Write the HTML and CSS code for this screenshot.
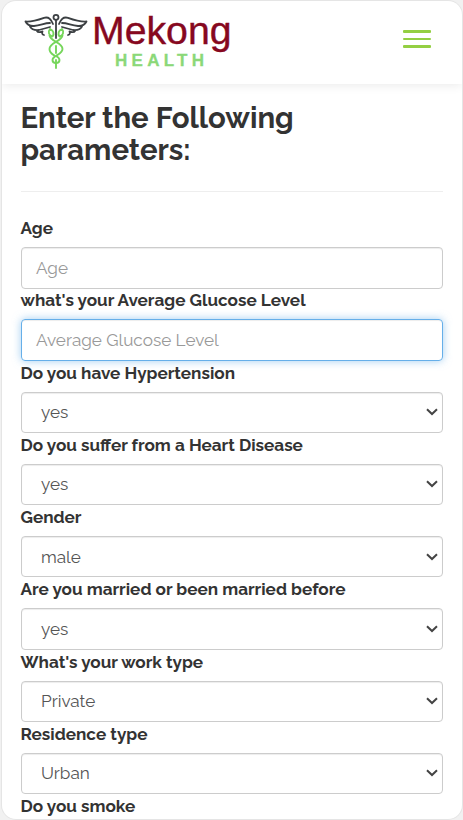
FILE: index.html
```
<!DOCTYPE html>
<html lang="en">
<head>
<meta charset="utf-8">
<meta name="viewport" content="width=device-width, initial-scale=1">
<title>Mekong Health</title>
<link rel="stylesheet" href="styles.css">
</head>
<body>
<div class="screen">
  <header class="bar">
    <svg class="logo" width="216" height="64" viewBox="20 8 216 64" role="img" aria-label="Mekong Health">
      <g fill="none" stroke="#3c4043" stroke-width="1.8" stroke-linecap="round" stroke-linejoin="round">
        <circle cx="56" cy="17.3" r="2.500"/>
        <path d="M56 20V38"/>
        <path d="M53 24C51 19.500 49 16.500 44 17.800C38 20 32 22 25.500 21.500C27.500 25.500 30 26.200 34 26C41 25.500 44 23 50 23M30 26.500C32 30 35 30.500 39 30L50 27M37 31C38 33 40 32 42.500 31.500C41.500 33.500 42.500 34.500 44 35"/>
        <path d="M59 24C61 19.500 63 16.500 68 17.800C74 20 80 22 86.500 21.500C84.500 25.500 82 26.200 78 26C71 25.500 68 23 62 23M82 26.500C80 30 77 30.500 73 30L62 27M75 31C74 33 72 32 69.500 31.500C70.500 33.500 69.500 34.500 68 35"/>
      </g>
      <g fill="none" stroke="#76d65b" stroke-width="1.900" stroke-linecap="round" stroke-linejoin="round">
        <path d="M50 29C47.500 32 49 35.500 52.500 36.500C54.500 33.500 53.500 30.500 50 29M62 29C64.500 32 63 35.500 59.500 36.500C57.500 33.500 58.500 30.500 62 29"/>
        <path d="M49.500 35.500C51 42 62.500 42 62.500 49C62.500 55 52.500 55 52.500 60C52.500 64 59.500 64 59.500 60C59.500 58 58 57 56 56"/>
        <path d="M62.500 35.500C61 42 49.500 42 49.500 49C49.500 53 52 54 54.500 55.500M56 46V53M56 60V68"/>
      </g>
      <text class="brand" x="92" y="43.500" textLength="139.500" lengthAdjust="spacingAndGlyphs">Mekong</text>
      <text class="brand-sub" x="115" y="66" textLength="89" lengthAdjust="spacing">HEALTH</text>
    </svg>
    <div class="menu"><i></i><i class="thin"></i><i></i></div>
  </header>
  <main class="content">
    <h1>Enter the Following<br>parameters:</h1>
    <form class="fields">
      <div class="field"><label>Age</label><div class="box">Age</div></div>
      <div class="field"><label>what's your Average Glucose Level</label><div class="box focus">Average Glucose Level</div></div>
      <div class="field"><label>Do you have Hypertension</label><div class="box select">yes<svg class="chev" viewBox="0 0 12 8"><path d="M1 1.200L6 6L11 1.200"/></svg></div></div>
      <div class="field"><label>Do you suffer from a Heart Disease</label><div class="box select">yes<svg class="chev" viewBox="0 0 12 8"><path d="M1 1.200L6 6L11 1.200"/></svg></div></div>
      <div class="field"><label>Gender</label><div class="box select">male<svg class="chev" viewBox="0 0 12 8"><path d="M1 1.200L6 6L11 1.200"/></svg></div></div>
      <div class="field"><label>Are you married or been married before</label><div class="box select">yes<svg class="chev" viewBox="0 0 12 8"><path d="M1 1.200L6 6L11 1.200"/></svg></div></div>
      <div class="field"><label>What's your work type</label><div class="box select">Private<svg class="chev" viewBox="0 0 12 8"><path d="M1 1.200L6 6L11 1.200"/></svg></div></div>
      <div class="field"><label>Residence type</label><div class="box select">Urban<svg class="chev" viewBox="0 0 12 8"><path d="M1 1.200L6 6L11 1.200"/></svg></div></div>
      <div class="field"><label>Do you smoke</label></div>
    </form>
  </main>
</div>
</body>
</html>
```
FILE: styles.css
```
* { box-sizing: border-box; }
body {
  margin: 0;
  height: 820px;
  overflow: hidden;
  padding: 1px 1px 1px 2px;
  background: #f1f1f1;
  color: #333;
  font-family: Raleway, Lato, "Open Sans", sans-serif;
}
.screen {
  height: 818px;
  overflow: hidden;
  border-radius: 14px;
  background: #fff;
  box-shadow: 0 0 0 1px #e5e5e5;
}
.bar {
  height: 83px;
  padding: 7px 31px 0 18px;
  display: flex;
  justify-content: space-between;
  box-shadow: 0 1px 10px rgba(0, 0, 0, .09);
}
.logo { display: block; overflow: visible; }
.brand { font: 39px "Liberation Sans", sans-serif; fill: #860820; stroke: #860820; stroke-width: .4px; }
.brand-sub { font: bold 17px "Liberation Sans", sans-serif; fill: #8bd878; stroke: #8bd878; stroke-width: .3px; }
.menu {
  width: 28px;
  height: 18px;
  margin-top: 22px;
  display: flex;
  flex-direction: column;
  justify-content: space-between;
}
.menu i { height: 3px; border-radius: 1px; background: #94cf43; }
.menu .thin { height: 2px; }
.content { padding: 17px 19px 0 18.500px; }
h1 {
  height: 91px;
  margin: 0 0 26px;
  padding-top: 1px;
  border-bottom: 1px solid #eee;
  font-size: 29.350px;
  font-weight: 700;
  line-height: 32px;
  white-space: nowrap;
}
.field { height: 72.250px; }
label {
  display: block;
  height: 28.500px;
  font-size: 17.150px;
  font-weight: 700;
  line-height: 20px;
  white-space: nowrap;
}
.box {
  height: 42px;
  padding: 0 14.500px;
  display: flex;
  align-items: center;
  border: 1px solid #ccc;
  border-radius: 4px;
  box-shadow: inset 0 1px 1px rgba(0, 0, 0, .075);
  color: #999;
  font-size: 17.150px;
  font-weight: 400;
}
.focus {
  border-color: #66afe9;
  box-shadow: inset 0 1px 1px rgba(0, 0, 0, .075), 0 0 8px rgba(102, 175, 233, .6);
}
.select {
  height: 41.200px;
  margin-top: .6px;
  padding: 0 4px 0 19.500px;
  justify-content: space-between;
  color: #555;
}
.chev { width: 12px; height: 8px; fill: none; stroke: #444; stroke-width: 2; }
```
